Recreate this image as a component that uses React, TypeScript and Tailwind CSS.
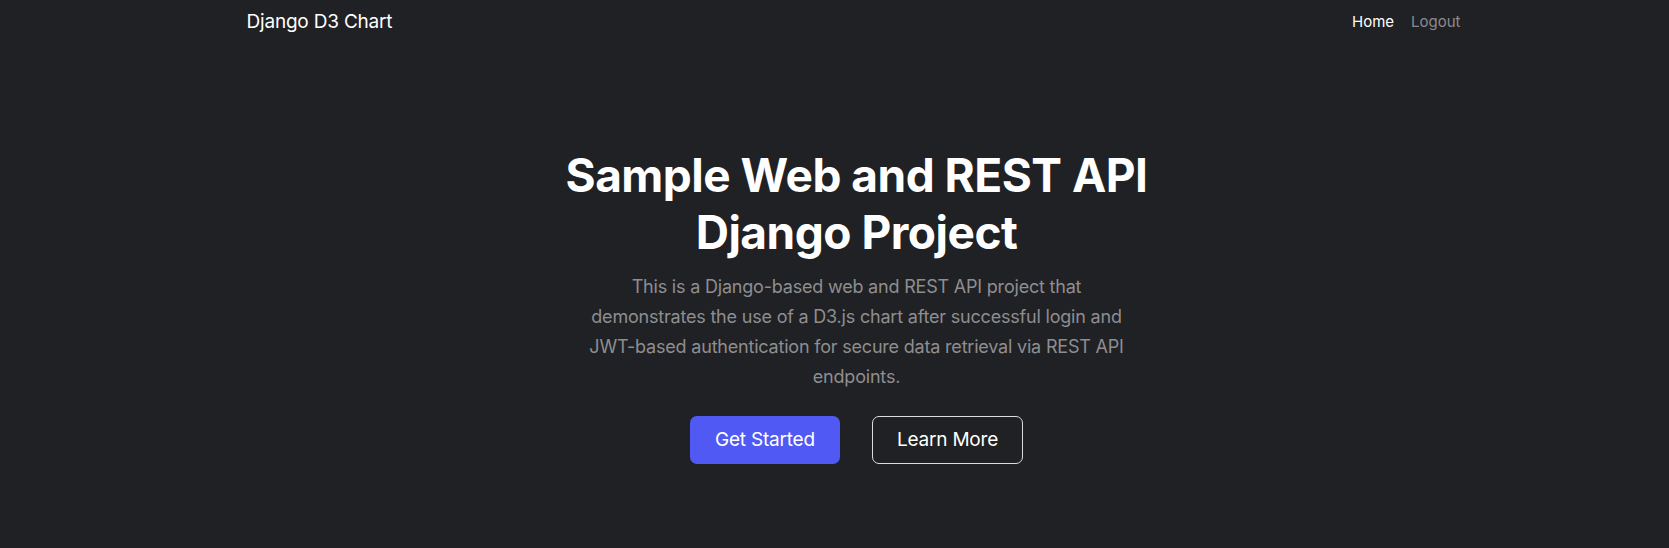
export default function App() {
  return (
    <div className="min-h-screen bg-[#202124] font-['Inter',sans-serif] text-white">
      <div className="pl-[38px]">
        <header className="mx-auto flex h-[44px] w-[1214px] items-center justify-between">
          <a href="#" className="text-[19px] tracking-[-0.2px]">
            Django D3 Chart
          </a>
          <nav className="flex gap-[17px] text-[15px]">
            <a href="#" className="text-white">
              Home
            </a>
            <a href="#" className="text-[#8b8b8e]">
              Logout
            </a>
          </nav>
        </header>
      </div>

      <div className="pl-[44px]">
        <main className="mx-auto flex w-[600px] flex-col items-center pt-[103px] text-center">
          <h1 className="text-[46px] font-bold leading-[56.5px] tracking-[-0.5px]">
            Sample Web and REST API
            <br />
            Django Project
          </h1>
          <p className="mt-[12px] whitespace-nowrap text-[18px] leading-[30px] tracking-[-0.2px] text-[#8e8e91]">
            This is a Django-based web and REST API project that
            <br />
            demonstrates the use of a D3.js chart after successful login and
            <br />
            JWT-based authentication for secure data retrieval via REST API
            <br />
            endpoints.
          </p>
          <div className="mt-[24px] flex gap-8">
            <button className="h-[48px] rounded-[7px] bg-[#5159f5] px-[25px] text-[19px] tracking-[-0.2px] text-white">
              Get Started
            </button>
            <button className="h-[48px] rounded-[7px] border border-[#dcdcde] px-6 text-[19px] tracking-[-0.2px] text-white">
              Learn More
            </button>
          </div>
        </main>
      </div>
    </div>
  );
}
